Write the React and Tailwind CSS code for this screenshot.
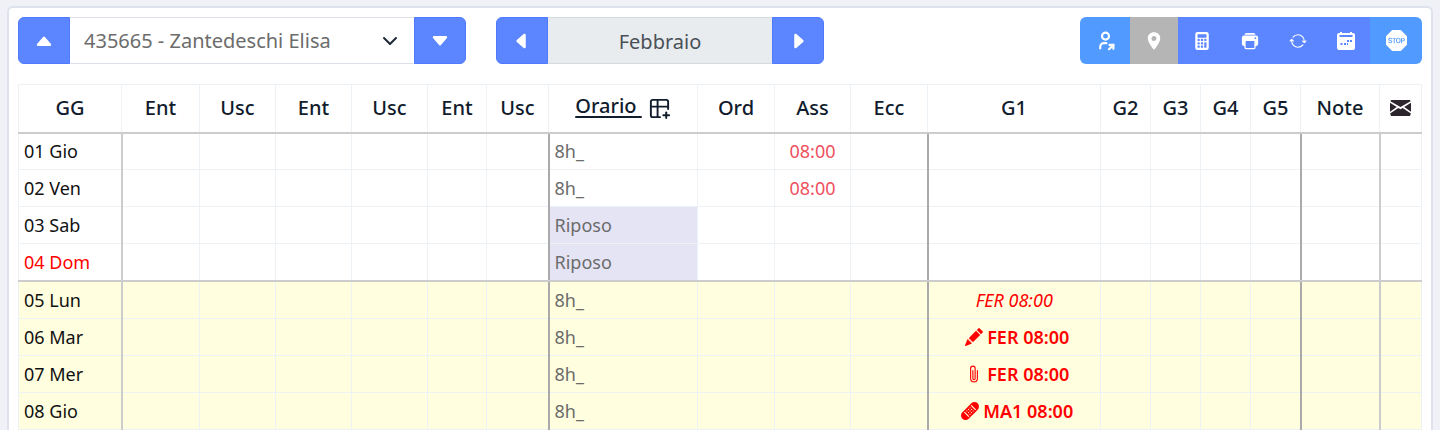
import React, { useState } from 'react';
import {
  BsCaretUpFill,
  BsCaretDownFill,
  BsCaretLeftFill,
  BsCaretRightFill,
  BsCalculatorFill,
  BsPencilFill,
  BsPaperclip,
  BsBandaidFill,
  BsSignStopFill,
} from 'react-icons/bs';
import { IoPrint, IoSync, IoLocationSharp } from 'react-icons/io5';
import { TbTablePlus, TbUserShare } from 'react-icons/tb';
import { clsx } from 'clsx';

const CalendarIcon = () => (
  <svg width="18" height="18" viewBox="0 0 18 18" fill="currentColor" aria-hidden="true">
    <path
      fillRule="evenodd"
      d="M3 0h2v1h8V0h2v1h1a2 2 0 0 1 2 2v13a2 2 0 0 1-2 2H2a2 2 0 0 1-2-2V3a2 2 0 0 1 2-2h1zM2.500 3v2h13V3zM13 8v2h2V8zM10 8v2h2V8zM7 11v2h2v-2zM10 11v2h1v-2zM3.500 11v2h2v-2z"
    />
  </svg>
);

const MailIcon = () => (
  <svg width="21" height="16" viewBox="0 0 21 16" fill="#2d252d" role="img" aria-label="Messaggi">
    <path d="M1 0h19l.6 1.200L10.500 7 .4 1.200zM0 2.800 6.800 7 0 11.800zM21 2.800v9L14.200 7zM8.300 7.900l2.200 1.300 2.200-1.300 8.200 5.600L20 16H1l-.9-2.500z" />
  </svg>
);

const columns = [
  { label: 'GG', width: 103, line: 'border-r-2 border-r-[#cccccc]' },
  { label: 'Ent', width: 78 },
  { label: 'Usc', width: 76 },
  { label: 'Ent', width: 76 },
  { label: 'Usc', width: 76 },
  { label: 'Ent', width: 59 },
  { label: 'Usc', width: 62, line: 'border-r-2 border-r-[#aaaaaa]' },
  { label: 'Orario', width: 149, key: 'orario' },
  { label: 'Ord', width: 77 },
  { label: 'Ass', width: 76, key: 'ass' },
  { label: 'Ecc', width: 77, line: 'border-r-2 border-r-[#aaaaaa]' },
  { label: 'G1', width: 173, key: 'g1' },
  { label: 'G2', width: 50 },
  { label: 'G3', width: 50 },
  { label: 'G4', width: 50 },
  { label: 'G5', width: 50, line: 'border-r-2 border-r-[#aaaaaa]' },
  { label: 'Note', width: 79, line: 'border-r-2 border-r-[#cccccc]' },
  { label: 'Messaggi', width: 42 },
];

const days = [
  { day: '01 Gio', orario: '8h_', ass: '08:00' },
  { day: '02 Ven', orario: '8h_', ass: '08:00' },
  { day: '03 Sab', orario: 'Riposo', rest: true },
  { day: '04 Dom', orario: 'Riposo', rest: true, holiday: true, weekEnd: true },
  { day: '05 Lun', orario: '8h_', g1: 'FER 08:00', pending: true, odd: true, weekStart: true },
  { day: '06 Mar', orario: '8h_', g1: 'FER 08:00', icon: BsPencilFill, odd: true },
  { day: '07 Mer', orario: '8h_', g1: 'FER 08:00', icon: BsPaperclip, odd: true },
  { day: '08 Gio', orario: '8h_', g1: 'MA1 08:00', icon: BsBandaidFill, odd: true },
];

const NavButton = ({ label, className, children }) => (
  <button
    type="button"
    aria-label={label}
    className={clsx('flex w-[52px] items-center justify-center border border-[#4f7aff] bg-[#5b86ff] text-white', className)}
  >
    {children}
  </button>
);

const ToolButton = ({ label, className, children }) => (
  <button
    type="button"
    aria-label={label}
    className={clsx('flex w-12 items-center justify-center text-white', className || 'bg-[#5b86ff]')}
  >
    {children}
  </button>
);

const Toolbar = () => {
  const [employee, setEmployee] = useState('435665');

  return (
    <div className="flex h-[47px] items-stretch text-xl">
      <div className="flex">
        <NavButton label="Dipendente precedente" className="rounded-l-md">
          <BsCaretUpFill size={20} />
        </NavButton>
        <div className="relative flex w-[344px]">
          <select
            aria-label="Dipendente"
            value={employee}
            onChange={(e) => setEmployee(e.target.value)}
            className="w-full appearance-none border-y border-[#dce0e8] bg-white pl-3.5 text-[#6c6c6c] outline-none"
          >
            <option value="435665">435665 - Zantedeschi Elisa</option>
          </select>
          <svg
            className="pointer-events-none absolute top-4 right-4"
            width="16"
            height="16"
            viewBox="0 0 16 16"
            fill="none"
            stroke="#1f2937"
            strokeWidth="2"
            strokeLinecap="round"
            strokeLinejoin="round"
          >
            <path d="m2 5 6 6 6-6" />
          </svg>
        </div>
        <NavButton label="Dipendente successivo" className="rounded-r-md">
          <BsCaretDownFill size={20} />
        </NavButton>
      </div>

      <div className="ml-[30px] flex">
        <NavButton label="Mese precedente" className="rounded-l-md">
          <BsCaretLeftFill size={20} />
        </NavButton>
        <input
          aria-label="Mese"
          readOnly
          value="Febbraio"
          className="w-[224px] border-y border-[#d5dade] bg-[#e9ecef] pt-0.5 text-center text-[#495057] outline-none"
        />
        <NavButton label="Mese successivo" className="rounded-r-md">
          <BsCaretRightFill size={20} />
        </NavButton>
      </div>

      <div className="ml-auto flex overflow-hidden rounded-md">
        <ToolButton label="Profilo" className="w-[50px] bg-[#519aff]">
          <TbUserShare size={21} strokeWidth={2.5} />
        </ToolButton>
        <ToolButton label="Posizione" className="bg-[#b5b5b5]">
          <IoLocationSharp size={20} />
        </ToolButton>
        <ToolButton label="Calcola">
          <BsCalculatorFill size={18} />
        </ToolButton>
        <ToolButton label="Stampa">
          <IoPrint size={20} />
        </ToolButton>
        <ToolButton label="Aggiorna">
          <IoSync size={18} />
        </ToolButton>
        <ToolButton label="Calendario">
          <CalendarIcon />
        </ToolButton>
        <ToolButton label="Stop" className="w-[52px] bg-[#519aff]">
          <BsSignStopFill size={21} />
        </ToolButton>
      </div>
    </div>
  );
};

const HeaderLabel = ({ label }) => {
  if (label === 'Messaggi') {
    return (
      <span className="flex justify-center">
        <MailIcon />
      </span>
    );
  }
  if (label === 'Orario') {
    return (
      <span className="flex items-center justify-center gap-1.5">
        <a href="#orario" className="pb-1 whitespace-pre underline underline-offset-3">{'Orario '}</a>
        <TbTablePlus size={23} strokeWidth={2} />
      </span>
    );
  }
  return label;
};

const Cell = ({ column, row }) => {
  const Icon = row.icon;
  return (
    <td
      className={clsx(
        'border border-[#edf2f7] p-0 px-[5px] whitespace-nowrap',
        column.line,
        column.key === 'orario' && 'text-[#6c6c6c]',
        column.key === 'orario' && row.rest && 'bg-[#e5e4f5]',
        column.key === 'ass' && 'text-center text-[#ee5060]',
        column.key === 'g1' && 'text-center text-[#ff0000]',
        column.key === 'g1' && (row.pending ? 'italic' : 'font-semibold')
      )}
    >
      {column.key === 'g1' && row.g1 ? (
        <span className={clsx('flex items-center justify-center gap-1', Icon && 'pl-1.5')}>
          {Icon && <Icon size={18} />}
          {row.g1}
        </span>
      ) : (
        column.key && row[column.key]
      )}
    </td>
  );
};

const Timesheet = () => (
  <table className="mt-5 w-full table-fixed border-collapse text-lg text-[#111111]">
    <colgroup>
      {columns.map((c, i) => (
        <col key={i} style={{ width: c.width }} />
      ))}
    </colgroup>
    <thead>
      <tr className="h-12 border-b-2 border-b-[#cccccc] text-xl text-[#111c2d]">
        {columns.map((c, i) => (
          <th key={i} scope="col" className="border border-b-2 border-[#edf2f7] border-b-[#cccccc] p-0 font-medium">
            <HeaderLabel label={c.label} />
          </th>
        ))}
      </tr>
    </thead>
    <tbody>
      {days.map((row) => (
        <tr
          key={row.day}
          className={clsx(
            row.weekStart ? 'h-[38px]' : 'h-[37px]',
            row.odd && 'bg-[#ffffdf]',
            row.weekEnd && '[&>*]:border-b-2 [&>*]:border-b-[#cccccc]'
          )}
        >
          <th
            scope="row"
            className={clsx(
              'border border-[#edf2f7] p-0 px-[5px] text-left font-normal whitespace-nowrap',
              columns[0].line,
              row.holiday && 'text-[#ff0000]'
            )}
          >
            {row.day}
          </th>
          {columns.slice(1).map((c, i) => (
            <Cell key={i} column={c} row={row} />
          ))}
        </tr>
      ))}
    </tbody>
  </table>
);

export default function App() {
  return (
    <div className="h-screen overflow-hidden bg-[#f0f1f6] px-[7px] pt-1.5 font-['Noto_Sans',sans-serif]">
      <main className="min-h-screen rounded-md border-2 border-[#dee2ec] bg-white px-[9px] pt-[9px]">
        <Toolbar />
        <Timesheet />
      </main>
    </div>
  );
}
